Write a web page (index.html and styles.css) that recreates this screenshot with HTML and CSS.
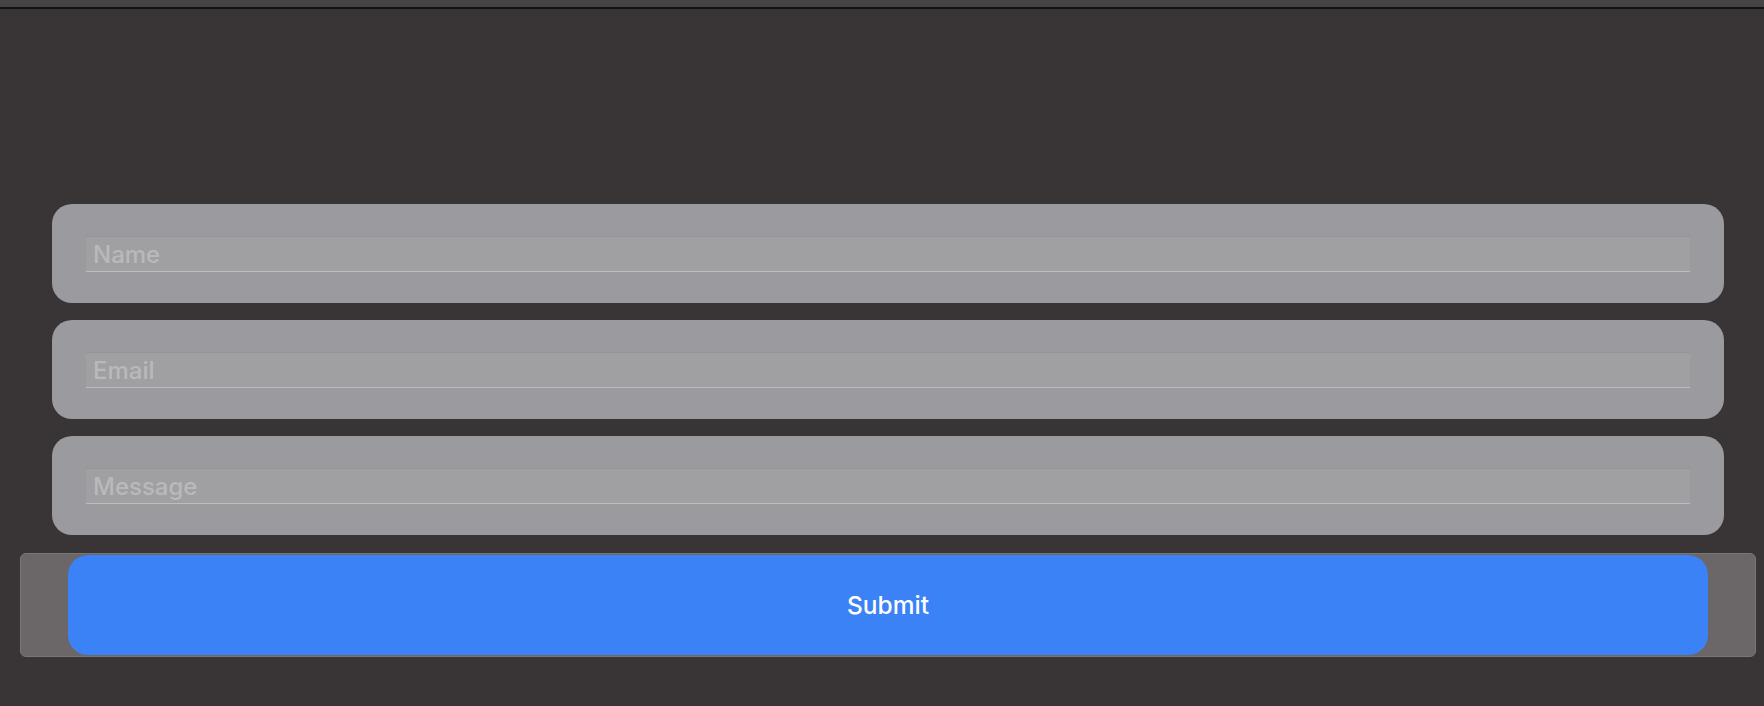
FILE: index.html
```html
<!DOCTYPE html>
<html lang="en">
<head>
<meta charset="utf-8">
<title>Contact form</title>
<link rel="stylesheet" href="styles.css">
</head>
<body>
<div class="topbar"></div>
<main class="page">
  <form class="form">
    <div class="card"><input class="field" type="text" placeholder="Name"></div>
    <div class="card"><input class="field" type="email" placeholder="Email"></div>
    <div class="card"><input class="field" type="text" placeholder="Message"></div>
    <div class="submit-wrap">
      <button class="submit" type="button">Submit</button>
    </div>
  </form>
</main>
</body>
</html>
```

FILE: styles.css
```css
html, body {
  margin: 0;
  padding: 0;
  background: #393536;
  font-family: Inter, "Liberation Sans", Arial, sans-serif;
}

.topbar {
  height: 7px;
  background: #454344;
  border-bottom: 2px solid #121212;
}

.page {
  padding-top: 195px;
  height: 502px;
}

.form {
  display: flex;
  flex-direction: column;
  gap: 17px;
  margin: 0;
}

.card {
  margin: 0 40px 0 52px;
  height: 99px;
  box-sizing: border-box;
  padding: 32px 34px 0 34px;
  background: #9b9a9e;
  border-radius: 20px;
}

.field {
  display: block;
  width: 100%;
  height: 36px;
  box-sizing: border-box;
  margin: 0;
  padding: 0 7px;
  background: #a0a0a2;
  border: none;
  border-top: 1px solid #959497;
  border-bottom: 1px solid #bdbdbf;
  font-family: Inter, "Liberation Sans", Arial, sans-serif;
  font-size: 24px;
  font-weight: 500;
  color: #e8e8ea;
  outline: none;
}

.field::placeholder {
  color: #b9b9bb;
  opacity: 1;
}

.submit-wrap {
  margin: 1px 8px 0 20px;
  height: 104px;
  box-sizing: border-box;
  padding: 1px 47px;
  background: #6b6768;
  border: 1px solid #7a7677;
  border-radius: 6px;
  display: flex;
}

.submit {
  flex: 1;
  height: 100px;
  border: none;
  border-radius: 20px;
  background: #3b82f6;
  color: #ffffff;
  font-family: Inter, "Liberation Sans", Arial, sans-serif;
  font-size: 24.5px;
  font-weight: 500;
  cursor: pointer;
  padding: 0;
}
```
